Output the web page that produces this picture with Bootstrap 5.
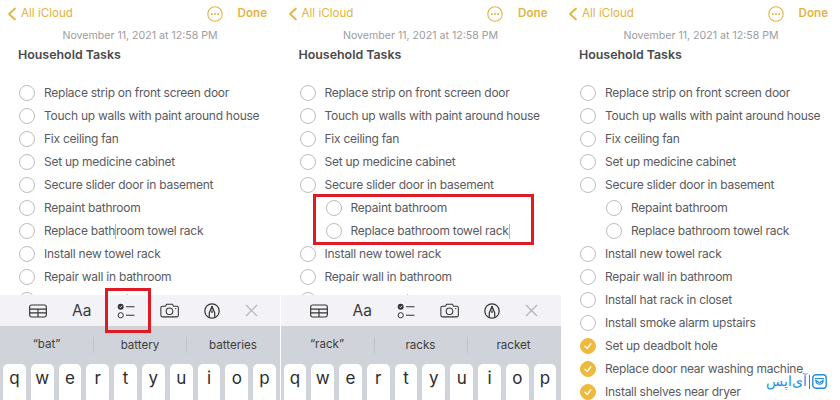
<!DOCTYPE html>
<html lang="en">
<head>
  <meta charset="UTF-8">
  <title>Household Tasks</title>
  <link href="https://cdn.jsdelivr.net/npm/bootstrap@5.3.3/dist/css/bootstrap.min.css" rel="stylesheet">
  <style>
    html, body { height: 400px; overflow: hidden; }
    body { font-family: Inter, "Liberation Sans", sans-serif; background: #fff; color: #5a5a5e; }
    .phones { width: 840px; height: 400px; }
    .phone { width: 280px; height: 400px; overflow: hidden; position: relative; flex: none; }
    .phone + .phone { margin-left: 0.5px; }
    .top-bar { height: 26px; padding: 1px 13px 0 7px; color: #e3b341; font-size: 11.6px; }
    .back-label { margin-left: 4px; }
    .more-dots { margin-right: 15px; }
    .done-link { font-weight: 600; }
    .note-date { font-size: 10.6px; color: #9c9ca0; text-align: center; height: 19px; line-height: 19px; margin: 0; }
    .note-title { font-size: 12.4px; font-weight: 600; color: #4a4a4e; padding-left: 18px; height: 19px; line-height: 19px; margin: 0 0 17px; }
    .task-row { height: 23px; padding-left: 19px; font-size: 12px; letter-spacing: -0.25px; white-space: nowrap; }
    .task-row.nested { padding-left: 45px; }
    .tick-ring { width: 16px; height: 16px; border: 1px solid #bdbdc0; border-radius: 50%; margin-right: 9px; flex: none; }
    .tick-on { background: #efb93c; border-color: #efb93c; }
    .caret-mark { display: inline-block; width: 1px; height: 15px; background: #e3b341; vertical-align: middle; }
    .kbd-wrap { position: absolute; left: 0; right: 0; top: 295px; bottom: 0; }
    .tool-bar { height: 31px; background: #f3f3f7; padding: 0 22px 0 29px; }
    .tool-font { font-size: 15.5px; color: #3a3a3c; line-height: 1; }
    .kbd-body { height: 74px; background: #d0d3d9; }
    .suggest-row { height: 38px; font-size: 11.6px; color: #3c3c40; }
    .suggest-cell { width: 93px; text-align: center; }
    .suggest-cell + .suggest-cell { border-left: 1px solid #bfc2c8; height: 16px; line-height: 16px; }
    .key-row { gap: 5px; padding-left: 3px; }
    .kbd-key { width: 22.8px; height: 40px; background: #fff; border-radius: 5px; font-size: 17px; color: #2c2c2e; text-align: center; line-height: 28px; flex: none; }
    .red-box { position: absolute; border: 3px solid #de1a24; }
    .box-one { left: 105px; top: 288px; width: 46px; height: 45px; }
    .box-two { left: 32px; top: 194px; width: 221px; height: 51px; }
    .app-mark { position: absolute; left: 205px; top: 374px; color: #1f8fe0; font-size: 13.5px; line-height: 1; gap: 2px; }
    .mark-sep { width: 1px; height: 14px; background: #1f8fe0; }
  </style>
</head>
<body>

<svg width="0" height="0" class="position-absolute">
  <symbol id="ic-back" viewBox="0 0 10 14"><path d="M8 1.5 2 7l6 5.5" fill="none" stroke="currentColor" stroke-width="1.7" stroke-linecap="round" stroke-linejoin="round"/></symbol>
  <symbol id="ic-more" viewBox="0 0 16 16"><circle cx="8" cy="8" r="7.2" fill="none" stroke="currentColor" stroke-width="1.1"/><circle cx="4.8" cy="8" r="1" fill="currentColor"/><circle cx="8" cy="8" r="1" fill="currentColor"/><circle cx="11.2" cy="8" r="1" fill="currentColor"/></symbol>
  <symbol id="ic-table" viewBox="0 0 19 14"><rect x=".7" y=".7" width="17.6" height="12.6" rx="2" fill="none" stroke="#333" stroke-width="1.2"/><path d="M.7 5h17.6M.7 9h17.6M9.5 5v8.3" stroke="#333" stroke-width="1.2" fill="none"/></symbol>
  <symbol id="ic-check" viewBox="0 0 18 16"><circle cx="3.7" cy="3.7" r="3" fill="#333"/><path d="M2.4 3.7l1 1 1.7-2" stroke="#fff" stroke-width=".8" fill="none"/><circle cx="3.7" cy="12.2" r="2.6" fill="none" stroke="#333" stroke-width="1"/><path d="M9 3.7h8.500M9 12.2h8.500" stroke="#333" stroke-width="1.1"/></symbol>
  <symbol id="ic-camera" viewBox="0 0 20 15"><path d="M2.5 3h3.2l1.2-2h6.2l1.2 2h3.2A1.6 1.6 0 0 1 19.300 4.600v8a1.600 1.600 0 0 1-1.600 1.600H2.500A1.600 1.600 0 0 1 .9 12.600v-8A1.600 1.600 0 0 1 2.500 3z" fill="none" stroke="#333" stroke-width="1.100"/><circle cx="10" cy="8.300" r="3.500" fill="none" stroke="#333" stroke-width="1.100"/><circle cx="16.500" cy="5.500" r=".7" fill="#333"/></symbol>
  <symbol id="ic-markup" viewBox="0 0 16 16"><circle cx="8" cy="8" r="7.200" fill="none" stroke="#333" stroke-width="1.200"/><path d="M5.300 14.500V9.800L8 3.300l2.700 6.500v4.700" fill="none" stroke="#333" stroke-width="1.200" stroke-linejoin="round"/><path d="M8 3.300v5.200" stroke="#333" stroke-width=".8"/><circle cx="8" cy="9" r=".9" fill="#333"/></symbol>
  <symbol id="ic-close" viewBox="0 0 13 13"><path d="M1 1l11 11M12 1 1 12" stroke="#b4b4b8" stroke-width="1.200"/></symbol>
  <symbol id="ic-tick" viewBox="0 0 10 10"><path d="M2 5.200 4.200 7.500 8 2.700" fill="none" stroke="#fff" stroke-width="1.300" stroke-linecap="round" stroke-linejoin="round"/></symbol>
  <symbol id="ic-brand" viewBox="0 0 15 15"><rect x=".8" y=".8" width="13.400" height="13.400" rx="3" fill="none" stroke="#1f8fe0" stroke-width="1.400"/><path d="M3 4.500h9M3.800 6.500c.5 5 7 5 7.400 0L7.500 8.800z" fill="none" stroke="#1f8fe0" stroke-width="1.200"/></symbol>
</svg>

<div class="phones d-flex">

  <!-- Phone 1 -->
  <div class="phone">
    <div class="top-bar d-flex align-items-center">
      <svg width="10" height="14"><use href="#ic-back"/></svg>
      <span class="back-label">All iCloud</span>
      <svg class="ms-auto more-dots" width="16" height="16"><use href="#ic-more"/></svg>
      <span class="done-link">Done</span>
    </div>
    <p class="note-date">November 11, 2021 at 12:58 PM</p>
    <p class="note-title">Household Tasks</p>
    <div class="task-row d-flex align-items-center"><span class="tick-ring"></span>Replace strip on front screen door</div>
    <div class="task-row d-flex align-items-center"><span class="tick-ring"></span>Touch up walls with paint around house</div>
    <div class="task-row d-flex align-items-center"><span class="tick-ring"></span>Fix ceiling fan</div>
    <div class="task-row d-flex align-items-center"><span class="tick-ring"></span>Set up medicine cabinet</div>
    <div class="task-row d-flex align-items-center"><span class="tick-ring"></span>Secure slider door in basement</div>
    <div class="task-row d-flex align-items-center"><span class="tick-ring"></span>Repaint bathroom</div>
    <div class="task-row d-flex align-items-center"><span class="tick-ring"></span><span>Replace bath<span class="caret-mark"></span>room towel rack</span></div>
    <div class="task-row d-flex align-items-center"><span class="tick-ring"></span>Install new towel rack</div>
    <div class="task-row d-flex align-items-center"><span class="tick-ring"></span>Repair wall in bathroom</div>
    <div class="task-row d-flex align-items-center"><span class="tick-ring"></span>Install hat rack in closet</div>
    <div class="kbd-wrap">
      <div class="tool-bar d-flex align-items-center justify-content-between">
        <svg width="18" height="14"><use href="#ic-table"/></svg>
        <span class="tool-font">Aa</span>
        <svg width="18" height="16"><use href="#ic-check"/></svg>
        <svg width="19" height="15"><use href="#ic-camera"/></svg>
        <svg width="16" height="16"><use href="#ic-markup"/></svg>
        <svg width="13" height="13"><use href="#ic-close"/></svg>
      </div>
      <div class="kbd-body">
        <div class="suggest-row d-flex align-items-center">
          <span class="suggest-cell">“bat”</span><span class="suggest-cell">battery</span><span class="suggest-cell">batteries</span>
        </div>
        <div class="key-row d-flex">
          <span class="kbd-key">q</span><span class="kbd-key">w</span><span class="kbd-key">e</span><span class="kbd-key">r</span><span class="kbd-key">t</span><span class="kbd-key">y</span><span class="kbd-key">u</span><span class="kbd-key">i</span><span class="kbd-key">o</span><span class="kbd-key">p</span>
        </div>
      </div>
    </div>
    <div class="red-box box-one"></div>
  </div>

  <!-- Phone 2 -->
  <div class="phone">
    <div class="top-bar d-flex align-items-center">
      <svg width="10" height="14"><use href="#ic-back"/></svg>
      <span class="back-label">All iCloud</span>
      <svg class="ms-auto more-dots" width="16" height="16"><use href="#ic-more"/></svg>
      <span class="done-link">Done</span>
    </div>
    <p class="note-date">November 11, 2021 at 12:58 PM</p>
    <p class="note-title">Household Tasks</p>
    <div class="task-row d-flex align-items-center"><span class="tick-ring"></span>Replace strip on front screen door</div>
    <div class="task-row d-flex align-items-center"><span class="tick-ring"></span>Touch up walls with paint around house</div>
    <div class="task-row d-flex align-items-center"><span class="tick-ring"></span>Fix ceiling fan</div>
    <div class="task-row d-flex align-items-center"><span class="tick-ring"></span>Set up medicine cabinet</div>
    <div class="task-row d-flex align-items-center"><span class="tick-ring"></span>Secure slider door in basement</div>
    <div class="task-row nested d-flex align-items-center"><span class="tick-ring"></span>Repaint bathroom</div>
    <div class="task-row nested d-flex align-items-center"><span class="tick-ring"></span><span>Replace bathroom towel rack<span class="caret-mark"></span></span></div>
    <div class="task-row d-flex align-items-center"><span class="tick-ring"></span>Install new towel rack</div>
    <div class="task-row d-flex align-items-center"><span class="tick-ring"></span>Repair wall in bathroom</div>
    <div class="task-row d-flex align-items-center"><span class="tick-ring"></span>Install hat rack in closet</div>
    <div class="kbd-wrap">
      <div class="tool-bar d-flex align-items-center justify-content-between">
        <svg width="18" height="14"><use href="#ic-table"/></svg>
        <span class="tool-font">Aa</span>
        <svg width="18" height="16"><use href="#ic-check"/></svg>
        <svg width="19" height="15"><use href="#ic-camera"/></svg>
        <svg width="16" height="16"><use href="#ic-markup"/></svg>
        <svg width="13" height="13"><use href="#ic-close"/></svg>
      </div>
      <div class="kbd-body">
        <div class="suggest-row d-flex align-items-center">
          <span class="suggest-cell">“rack”</span><span class="suggest-cell">racks</span><span class="suggest-cell">racket</span>
        </div>
        <div class="key-row d-flex">
          <span class="kbd-key">q</span><span class="kbd-key">w</span><span class="kbd-key">e</span><span class="kbd-key">r</span><span class="kbd-key">t</span><span class="kbd-key">y</span><span class="kbd-key">u</span><span class="kbd-key">i</span><span class="kbd-key">o</span><span class="kbd-key">p</span>
        </div>
      </div>
    </div>
    <div class="red-box box-two"></div>
  </div>

  <!-- Phone 3 -->
  <div class="phone">
    <div class="top-bar d-flex align-items-center">
      <svg width="10" height="14"><use href="#ic-back"/></svg>
      <span class="back-label">All iCloud</span>
      <svg class="ms-auto more-dots" width="16" height="16"><use href="#ic-more"/></svg>
      <span class="done-link">Done</span>
    </div>
    <p class="note-date">November 11, 2021 at 12:58 PM</p>
    <p class="note-title">Household Tasks</p>
    <div class="task-row d-flex align-items-center"><span class="tick-ring"></span>Replace strip on front screen door</div>
    <div class="task-row d-flex align-items-center"><span class="tick-ring"></span>Touch up walls with paint around house</div>
    <div class="task-row d-flex align-items-center"><span class="tick-ring"></span>Fix ceiling fan</div>
    <div class="task-row d-flex align-items-center"><span class="tick-ring"></span>Set up medicine cabinet</div>
    <div class="task-row d-flex align-items-center"><span class="tick-ring"></span>Secure slider door in basement</div>
    <div class="task-row nested d-flex align-items-center"><span class="tick-ring"></span>Repaint bathroom</div>
    <div class="task-row nested d-flex align-items-center"><span class="tick-ring"></span>Replace bathroom towel rack</div>
    <div class="task-row d-flex align-items-center"><span class="tick-ring"></span>Install new towel rack</div>
    <div class="task-row d-flex align-items-center"><span class="tick-ring"></span>Repair wall in bathroom</div>
    <div class="task-row d-flex align-items-center"><span class="tick-ring"></span>Install hat rack in closet</div>
    <div class="task-row d-flex align-items-center"><span class="tick-ring"></span>Install smoke alarm upstairs</div>
    <div class="task-row d-flex align-items-center"><span class="tick-ring tick-on d-flex align-items-center justify-content-center"><svg width="10" height="10"><use href="#ic-tick"/></svg></span>Set up deadbolt hole</div>
    <div class="task-row d-flex align-items-center"><span class="tick-ring tick-on d-flex align-items-center justify-content-center"><svg width="10" height="10"><use href="#ic-tick"/></svg></span>Replace door near washing machine</div>
    <div class="task-row d-flex align-items-center"><span class="tick-ring tick-on d-flex align-items-center justify-content-center"><svg width="10" height="10"><use href="#ic-tick"/></svg></span>Install shelves near dryer</div>
    <div class="app-mark d-flex align-items-center">
      <span dir="rtl" lang="fa">آی‌اپس</span>
      <span class="mark-sep"></span>
      <svg width="15" height="15"><use href="#ic-brand"/></svg>
    </div>
  </div>

</div>

<script src="https://cdn.jsdelivr.net/npm/bootstrap@5.3.3/dist/js/bootstrap.bundle.min.js"></script>
</body>
</html>
